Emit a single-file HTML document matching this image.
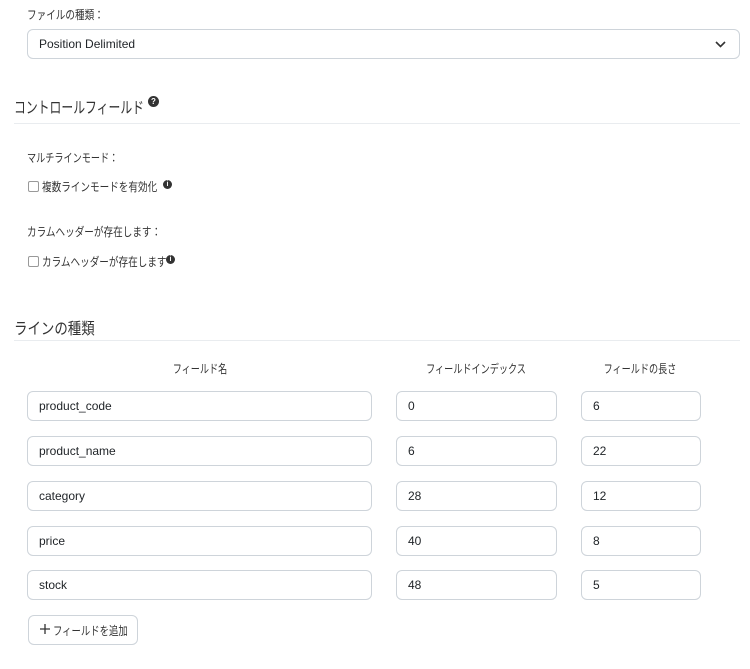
<!DOCTYPE html>
<html><head><meta charset="utf-8"><style>
*{box-sizing:border-box;margin:0;padding:0}
body{width:750px;height:669px;background:#fff;position:relative;overflow:hidden;font-family:"Liberation Sans","Noto Sans CJK JP",sans-serif;color:#212529;font-size:12px}
.a{position:absolute;white-space:nowrap}
.s{transform:scaleX(.76);transform-origin:0 50%}
.box{position:absolute;border:1px solid #ced4da;border-radius:6px;background:#fff;height:30px;padding-left:11px;line-height:28px;font-size:12px;color:#212529;white-space:nowrap}
.lbl{font-size:12px;color:#333}
.h{font-size:16px;color:#333}
.hr{position:absolute;left:14px;width:726px;height:1px;background:#e9ecef}
.cb{position:absolute;width:11px;height:11px;border:1px solid #999;border-radius:2px}
.i{position:absolute;width:9px;height:9px;border-radius:50%;background:#333;color:#fff;font-size:7px;line-height:9px;text-align:center;font-weight:bold}
.th{font-size:12px;color:#333;transform:translateX(-50%) scaleX(.76);transform-origin:50% 50%}
</style></head><body>
<div class="a lbl s" style="left:27px;top:6px;transform:scaleX(.8)">ファイルの種類：</div>
<div class="box" style="left:27px;top:29px;width:713px">Position Delimited
<svg style="position:absolute;right:13px;top:11px" width="11" height="7" viewBox="0 0 11 7"><path d="M1 1l4.5 4.5L10 1" fill="none" stroke="#333" stroke-width="1.6"/></svg></div>
<div class="a h s" style="left:14px;top:94px;transform:scaleX(.74)">コントロールフィールド</div>
<div class="i" style="left:148px;top:96px;width:11px;height:11px;line-height:11px;font-size:8px">?</div>
<div class="hr" style="top:123px"></div>
<div class="a lbl s" style="left:27px;top:149px;transform:scaleX(.76)">マルチラインモード：</div>
<div class="cb" style="left:28px;top:181px"></div>
<div class="a lbl s" style="left:42px;top:178px;transform:scaleX(.8)">複数ラインモードを有効化</div>
<div class="i" style="left:163px;top:180px">i</div>
<div class="a lbl s" style="left:27px;top:223px;transform:scaleX(.8)">カラムヘッダーが存在します：</div>
<div class="cb" style="left:28px;top:256px"></div>
<div class="a lbl s" style="left:42px;top:253px;transform:scaleX(.8)">カラムヘッダーが存在します</div>
<div class="i" style="left:166px;top:255px">i</div>
<div class="a h s" style="left:14px;top:315px;transform:scaleX(.84)">ラインの種類</div>
<div class="hr" style="top:340px"></div>
<div class="a th" style="left:200px;top:360px">フィールド名</div>
<div class="a th" style="left:476px;top:360px">フィールドインデックス</div>
<div class="a th" style="left:640px;top:360px">フィールドの長さ</div>

<div class="box" style="left:27px;top:391px;width:345px">product_code</div>
<div class="box" style="left:396px;top:391px;width:161px">0</div>
<div class="box" style="left:581px;top:391px;width:120px">6</div>

<div class="box" style="left:27px;top:436px;width:345px">product_name</div>
<div class="box" style="left:396px;top:436px;width:161px">6</div>
<div class="box" style="left:581px;top:436px;width:120px">22</div>

<div class="box" style="left:27px;top:481px;width:345px">category</div>
<div class="box" style="left:396px;top:481px;width:161px">28</div>
<div class="box" style="left:581px;top:481px;width:120px">12</div>

<div class="box" style="left:27px;top:526px;width:345px">price</div>
<div class="box" style="left:396px;top:526px;width:161px">40</div>
<div class="box" style="left:581px;top:526px;width:120px">8</div>

<div class="box" style="left:27px;top:570px;width:345px">stock</div>
<div class="box" style="left:396px;top:570px;width:161px">48</div>
<div class="box" style="left:581px;top:570px;width:120px">5</div>

<div class="box" style="left:28px;top:615px;width:110px;padding-left:0;color:#333"></div>
<svg class="a" style="left:40px;top:624px" width="10" height="10" viewBox="0 0 10 10"><path d="M5 0v10M0 5h10" stroke="#333" stroke-width="1.3"/></svg>
<div class="a lbl s" style="left:53px;top:622px;transform:scaleX(.78)">フィールドを追加</div>
</body></html>
